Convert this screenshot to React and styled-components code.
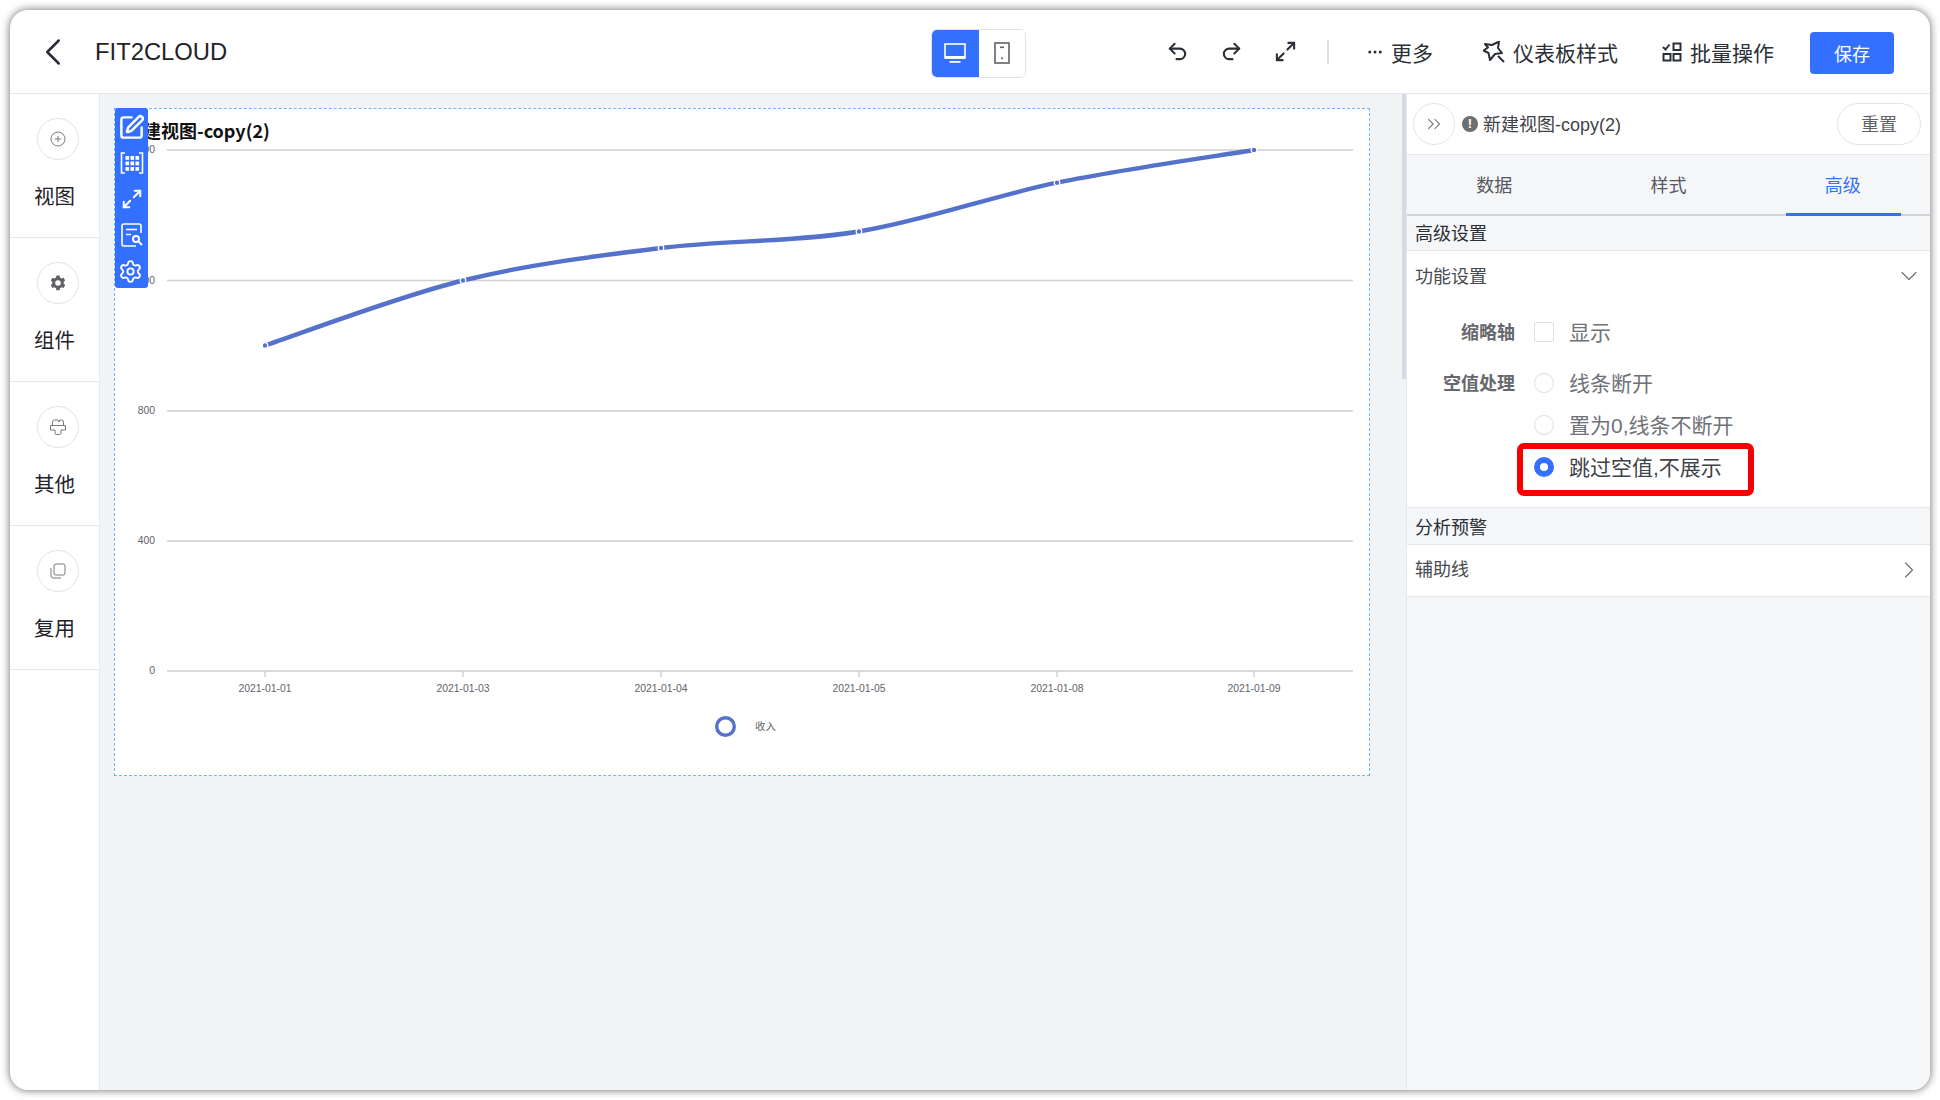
import React from 'react';
import styled, { createGlobalStyle } from 'styled-components';
import { ChevronLeft, ChevronDown, ChevronRight, ChevronsRight, Undo2, Redo2, Maximize2, SquarePen, Settings, MoreHorizontal } from 'lucide-react';

const FONT = '"Liberation Sans", "Noto Sans CJK SC", sans-serif';

const GlobalStyle = createGlobalStyle`
    html, body {
        margin: 0;
        padding: 0;
        background: #ffffff;
        overflow: hidden;
    }
    * {
        box-sizing: border-box;
    }
`;

// page
const Page = styled.div`
    width: 1940px;
    height: 1100px;
    padding: 10px;
    font-family: ${FONT};
`;

const Window = styled.div`
    width: 1920px;
    height: 1080px;
    display: flex;
    flex-direction: column;
    border-radius: 18px;
    overflow: hidden;
    background: #ffffff;
    box-shadow: 0 0 9px rgba(0, 0, 0, 0.6);
`;

// top bar
const TopBar = styled.header`
    height: 84px;
    flex: none;
    display: flex;
    align-items: center;
    border-bottom: 1px solid #e4e7ed;
`;

const TopLeft = styled.div`
    width: 921px;
    flex: none;
    display: flex;
    align-items: center;
    padding-left: 20px;
    color: #2b2f36;
`;

const AppTitle = styled.div`
    margin: 1px 0 0 19px;
    font-size: 23.8px;
    color: #1f2329;
`;

const DeviceGroup = styled.div`
    width: 95px;
    height: 49px;
    display: flex;
    border: 1px solid #dfe1e6;
    border-radius: 6px;
    overflow: hidden;
    margin-top: 3px;
`;

const DeviceButton = styled.div`
    flex: ${(p) => (p.$active ? '0 0 48px' : '1')};
    margin: ${(p) => (p.$active ? '-1px 0 -1px -1px' : '0')};
    display: flex;
    align-items: center;
    justify-content: center;
    background: ${(p) => (p.$active ? '#3370ff' : '#ffffff')};
`;

const TopRight = styled.div`
    flex: 1;
    display: flex;
    align-items: center;
    color: #2b2f36;
    padding-left: 139px;
`;

const IconButton = styled.span`
    width: 24px;
    height: 24px;
    display: flex;
    align-items: center;
    justify-content: center;
    margin-right: 30px;
`;

const Divider = styled.span`
    width: 2px;
    height: 24px;
    background: #dcdfe6;
    margin: 0 37px 0 0;
`;

const ToolItem = styled.div`
    display: flex;
    align-items: center;
    gap: ${(p) => p.$gap || 8}px;
    margin-right: ${(p) => p.$right || 36}px;
    font-size: 21px;
    color: #2b2f36;
    white-space: nowrap;
`;

const SaveButton = styled.button`
    width: 84px;
    height: 42px;
    border: 0;
    border-radius: 4px;
    background: #3370ff;
    color: #ffffff;
    font-family: inherit;
    font-size: 18px;
    margin-left: -1px;
    margin-top: 2px;
`;

// body
const Body = styled.div`
    flex: 1;
    display: flex;
    min-height: 0;
`;

const Sidebar = styled.aside`
    width: 90px;
    flex: none;
    border-right: 1px solid #e4e7ed;
`;

const SideItem = styled.div`
    height: 144px;
    padding-top: 24px;
    display: flex;
    flex-direction: column;
    align-items: center;
    border-bottom: 1px solid #e4e7ed;
`;

const SideCircle = styled.div`
    width: 42px;
    height: 42px;
    margin-left: 7px;
    display: flex;
    align-items: center;
    justify-content: center;
    border: 1px solid #e2e3e9;
    border-radius: 50%;
`;

const SideLabel = styled.div`
    margin-top: 23px;
    font-size: 20.5px;
    line-height: 28px;
    color: #1f2329;
`;

const Canvas = styled.main`
    position: relative;
    width: 1306px;
    flex: none;
    padding: 14px 0 0 14px;
    background: #f2f3f5;
`;

const ScrollThumb = styled.div`
    position: absolute;
    top: 0;
    right: 0;
    width: 4px;
    height: 285px;
    background: #d8d9e2;
`;

const ChartFrame = styled.section`
    position: relative;
    width: 1256px;
    height: 668px;
    background: #ffffff;
    border: 1px dashed #66b8ff;
`;

const ChartTitle = styled.div`
    height: 31px;
    padding: 8px 0 0 10px;
    font-family: "Noto Sans CJK SC", sans-serif;
    font-size: 18px;
    line-height: 26px;
    font-weight: 700;
    color: #111111;
    white-space: nowrap;
`;

const ChartSvg = styled.svg`
    display: block;
    width: 1254px;
    height: 635px;
`;

const AxisText = styled.text`
    font-family: ${FONT};
    font-size: 10.4px;
    fill: #5f6368;
`;

const HoverBar = styled.div`
    position: absolute;
    top: -1px;
    left: 0;
    width: 33px;
    height: 180px;
    display: flex;
    flex-direction: column;
    align-items: center;
    padding-top: 1px;
    background: #3370ff;
    border-radius: 3px;
    color: #ffffff;
`;

const HoverCell = styled.span`
    height: 36px;
    flex: none;
    display: flex;
    align-items: center;
    justify-content: center;
    margin-right: ${(p) => p.$shift || 0}px;
`;

// right panel
const Panel = styled.aside`
    flex: 1;
    display: flex;
    flex-direction: column;
    border-left: 1px solid #e4e7ed;
    background: #f5f6f8;
    position: relative;
`;

const PanelHeader = styled.div`
    height: 61px;
    flex: none;
    display: flex;
    align-items: center;
    padding: 0 9px 0 6px;
    background: #ffffff;
    border-bottom: 1px solid #e9ebef;
`;

const CollapseButton = styled.div`
    width: 42px;
    height: 42px;
    display: flex;
    align-items: center;
    justify-content: center;
    border: 1px solid #e4e5ea;
    border-radius: 50%;
    color: #7c7f85;
`;

const InfoDot = styled.span`
    width: 16px;
    height: 16px;
    margin-left: 7px;
    border-radius: 50%;
    background: #6d6e70;
    color: #ffffff;
    font-size: 13px;
    font-weight: 700;
    line-height: 16px;
    text-align: center;
`;

const ViewName = styled.div`
    margin: -3px 0 0 5px;
    font-size: 18px;
    color: #3f4248;
`;

const ResetButton = styled.div`
    width: 84px;
    height: 42px;
    margin-left: auto;
    padding-bottom: 3px;
    display: flex;
    align-items: center;
    justify-content: center;
    border: 1px solid #e4e5ea;
    border-radius: 21px;
    font-size: 18px;
    color: #5f6368;
    background: #ffffff;
`;

const Tabs = styled.div`
    height: 61px;
    flex: none;
    display: grid;
    grid-template-columns: repeat(3, 1fr);
    border-bottom: 2px solid #d3d4da;
`;

const Tab = styled.div`
    position: relative;
    display: flex;
    align-items: center;
    justify-content: center;
    padding-bottom: 2px;
    font-size: 18px;
    color: ${(p) => (p.$active ? '#3370ff' : '#55585e')};
    ${(p) => p.$active && `
        &::after {
            content: '';
            position: absolute;
            left: 30px;
            right: 29px;
            bottom: -2px;
            height: 3px;
            background: #3370ff;
        }
    `}
`;

const SectionTitle = styled.div`
    height: ${(p) => p.$height}px;
    display: flex;
    align-items: center;
    padding: 0 0 ${(p) => p.$lift || 0}px 8px;
    font-size: 18px;
    color: #2b2f36;
    border-bottom: 1px solid #e6e8ee;
`;

const RowHead = styled.div`
    height: ${(p) => p.$height}px;
    flex: none;
    display: flex;
    align-items: center;
    justify-content: space-between;
    padding: 0 7px ${(p) => p.$lift || 0}px 8px;
    font-size: 18px;
    color: #484b51;
    background: #ffffff;
    border-bottom: ${(p) => (p.$line ? '1px solid #e6e8ee' : '0')};
`;

const DownIcon = styled(ChevronDown)`
    margin-top: 3px;
`;

const RightIcon = styled(ChevronRight)`
    margin-top: 5px;
`;

const Form = styled.div`
    position: relative;
    height: 207px;
    padding-top: 9px;
    background: #ffffff;
    border-bottom: 1px solid #e6e8ee;
`;

const FormRow = styled.div`
    height: 42px;
    margin-top: ${(p) => p.$top || 0}px;
    display: flex;
    align-items: center;
`;

const FormLabel = styled.div`
    width: 108px;
    flex: none;
    text-align: right;
    font-size: 18px;
    font-weight: 700;
    color: #66686d;
`;

const Option = styled.div`
    display: flex;
    align-items: center;
    margin-left: 19px;
    font-size: 21px;
    color: ${(p) => (p.$on ? '#3f4248' : '#6f7278')};
`;

const CheckBox = styled.span`
    width: 20px;
    height: 20px;
    margin: 2px 15px 0 0;
    border: 1px solid #dcdee3;
    border-radius: 2px;
`;

const Radio = styled.span`
    width: 20px;
    height: 20px;
    margin: 2px 15px 0 0;
    border-radius: 50%;
    border: ${(p) => (p.$on ? '6px solid #3370ff' : '1px solid #dcdee3')};
    background: #ffffff;
`;

const RedMark = styled.div`
    position: absolute;
    left: 110px;
    top: 142px;
    width: 237px;
    height: 53px;
    border: 6px solid #f70000;
    border-radius: 7px;
`;

const points = [
    [265, 345.5],
    [463, 280.5],
    [661, 248],
    [859, 231.5],
    [1057, 182.7],
    [1254, 150],
];

// smooth line through the data points
function smoothPath(pts) {
    let d = `M${pts[0][0]} ${pts[0][1]}`;
    for (let i = 0; i < pts.length - 1; i += 1) {
        const p0 = pts[i - 1] || pts[i];
        const p1 = pts[i];
        const p2 = pts[i + 1];
        const p3 = pts[i + 2] || p2;
        const c1x = p1[0] + (p2[0] - p0[0]) / 6;
        const c1y = p1[1] + (p2[1] - p0[1]) / 6;
        const c2x = p2[0] - (p3[0] - p1[0]) / 6;
        const c2y = p2[1] - (p3[1] - p1[1]) / 6;
        d += ` C${c1x} ${c1y} ${c2x} ${c2y} ${p2[0]} ${p2[1]}`;
    }
    return d;
}

function Chart() {
    const lines = [
        [150, '1600'],
        [280.5, '1200'],
        [411, '800'],
        [541, '400'],
        [671, '0'],
    ];
    const dates = ['2021-01-01', '2021-01-03', '2021-01-04', '2021-01-05', '2021-01-08', '2021-01-09'];
    return (
        <ChartSvg viewBox="115 140 1254 635">
            {lines.map(([y, label]) => (
                <g key={label}>
                    <line x1="167" x2="1353" y1={y} y2={y} stroke="#cfcfcf" strokeWidth="1.6" />
                    <AxisText x="155" y={y + 3} textAnchor="end">{label}</AxisText>
                </g>
            ))}
            {points.map(([x], i) => (
                <g key={x}>
                    <line x1={x} x2={x} y1="671" y2="677" stroke="#cfcfcf" strokeWidth="1.4" />
                    <AxisText x={x} y="692" textAnchor="middle">{dates[i]}</AxisText>
                </g>
            ))}
            <path d={smoothPath(points)} fill="none" stroke="#5572cb" strokeWidth="4.4" />
            {points.map(([x, y]) => (
                <circle key={x} cx={x} cy={y} r="2.8" fill="#5572cb" stroke="#ffffff" strokeWidth="1.2" />
            ))}
            <circle cx="725.5" cy="726.5" r="8.8" fill="#ffffff" stroke="#5572cb" strokeWidth="3.4" />
            <AxisText x="755" y="730">收入</AxisText>
        </ChartSvg>
    );
}

const PlusIcon = () => (
    <svg width="16" height="16" viewBox="0 0 16 16" fill="none" stroke="#77797e" strokeWidth="1">
        <circle cx="8" cy="8" r="7" />
        <path d="M8 4.800v6.400M4.800 8h6.400" />
    </svg>
);

const GearIcon = () => (
    <svg width="16" height="16" viewBox="0 0 16 16">
        <path
            fill="#606266"
            fillRule="evenodd"
            d="M6.400 0.400h3.200l.4 2 1.700 1 1.900-.7 1.600 2.800-1.500 1.300v2l1.500 1.300-1.600 2.800-1.900-.7-1.700 1-.4 2H6.400l-.4-2-1.700-1-1.900.7L.8 10.100l1.500-1.300v-2L.8 5.500l1.600-2.800 1.900.7 1.700-1zM8 5.200a2.800 2.800 0 1 0 0 5.600 2.800 2.800 0 0 0 0-5.600z"
        />
    </svg>
);

const OtherIcon = () => (
    <svg width="16" height="16" viewBox="0 0 16 16" fill="none" stroke="#77797e" strokeWidth="1">
        <path d="M2.500 6.500V3a2 2 0 0 1 2-2H8l1 2 1-2h1.500a2 2 0 0 1 2 2v3.500" />
        <path d="M.5 6.500h15v4.500H11v3a1.500 1.500 0 0 1-1.500 1.500h-3A1.500 1.500 0 0 1 5 14v-3H.5z" />
    </svg>
);

const CopyIcon = () => (
    <svg width="16" height="16" viewBox="0 0 16 16" fill="none" stroke="#77797e" strokeWidth="1">
        <rect x="4" y="1" width="11" height="11" rx="2" />
        <path d="M1 5v7.500A2.500 2.500 0 0 0 3.500 15H11" />
    </svg>
);

const DesktopIcon = () => (
    <svg width="22" height="22" viewBox="0 0 22 22" fill="none">
        <rect x="1" y="2" width="20" height="14" stroke="#ffffff" strokeWidth="1.6" />
        <rect x="1" y="14" width="20" height="2.6" fill="#ffffff" />
        <rect x="5.500" y="19" width="11" height="1.8" fill="#ffffff" />
    </svg>
);

const TabletIcon = () => (
    <svg width="16" height="22" viewBox="0 0 16 22" fill="none">
        <rect x="1" y="1" width="14" height="20" stroke="#606266" strokeWidth="1.6" />
        <rect x="6" y="4.500" width="4" height="1.6" fill="#606266" />
        <rect x="7" y="15.500" width="2" height="1.6" fill="#606266" />
    </svg>
);

const StarIcon = () => (
    <svg width="22" height="22" viewBox="0 0 22 22" fill="none" stroke="#2b2f36" strokeWidth="2" strokeLinejoin="round">
        <path d="M2 3l7 1 7-3.500-1 6.500 4 5-7 1-5 6-1.500-7-5-2.500L5 6.500z" />
        <path d="M15 15l6 6" />
    </svg>
);

const BatchIcon = () => (
    <svg width="20" height="20" viewBox="0 0 20 20" fill="none" stroke="#2b2f36" strokeWidth="2">
        <path d="M1 5l2.500 2.500L7.500 2.500" />
        <rect x="11.500" y="1.500" width="7" height="6.500" />
        <rect x="1.500" y="12" width="7" height="6.500" />
        <rect x="11.500" y="12" width="7" height="6.500" />
    </svg>
);

const GridIcon = () => (
    <svg width="24" height="22" viewBox="0 0 24 22" fill="#ffffff">
        <path d="M5 1H1.500v20H5M19 1h3.500v20H19" fill="none" stroke="#ffffff" strokeWidth="1.6" />
        {[4, 9.5, 15].map((y) => [5.5, 10.5, 15.5].map((x) => (
            <rect key={`${x}-${y}`} x={x} y={y} width="3.6" height="3.8" />
        )))}
    </svg>
);

const DocSearchIcon = () => (
    <svg width="22" height="24" viewBox="0 0 22 24" fill="none" stroke="#ffffff" strokeWidth="1.6">
        <path d="M20 10V3a2 2 0 0 0-2-2H3a2 2 0 0 0-2 2v18a2 2 0 0 0 2 2h12" />
        <path d="M5 6.500h11M5 11.500h5" />
        <circle cx="15" cy="16" r="3" strokeWidth="2" />
        <path d="M17.500 18.500l3.500 3.500" strokeWidth="2" />
    </svg>
);

function App() {
    return (
        <Page>
            <GlobalStyle />
            <Window>
                <TopBar>
                    <TopLeft>
                        <ChevronLeft size={46} strokeWidth={1.3} />
                        <AppTitle>FIT2CLOUD</AppTitle>
                    </TopLeft>
                    <DeviceGroup>
                        <DeviceButton $active><DesktopIcon /></DeviceButton>
                        <DeviceButton><TabletIcon /></DeviceButton>
                    </DeviceGroup>
                    <TopRight>
                        <IconButton><Undo2 size={23} strokeWidth={2.2} /></IconButton>
                        <IconButton><Redo2 size={23} strokeWidth={2.2} /></IconButton>
                        <IconButton><Maximize2 size={23} strokeWidth={2.2} /></IconButton>
                        <Divider />
                        <ToolItem $gap={7} $right={50}>
                            <MoreHorizontal size={18} strokeWidth={2} />
                            更多
                        </ToolItem>
                        <ToolItem $right={44}>
                            <StarIcon />
                            仪表板样式
                        </ToolItem>
                        <ToolItem $right={37}>
                            <BatchIcon />
                            批量操作
                        </ToolItem>
                        <SaveButton>保存</SaveButton>
                    </TopRight>
                </TopBar>
                <Body>
                    <Sidebar>
                        <SideItem>
                            <SideCircle><PlusIcon /></SideCircle>
                            <SideLabel>视图</SideLabel>
                        </SideItem>
                        <SideItem>
                            <SideCircle><GearIcon /></SideCircle>
                            <SideLabel>组件</SideLabel>
                        </SideItem>
                        <SideItem>
                            <SideCircle><OtherIcon /></SideCircle>
                            <SideLabel>其他</SideLabel>
                        </SideItem>
                        <SideItem>
                            <SideCircle><CopyIcon /></SideCircle>
                            <SideLabel>复用</SideLabel>
                        </SideItem>
                    </Sidebar>
                    <Canvas>
                        <ChartFrame>
                            <ChartTitle>新建视图-copy(2)</ChartTitle>
                            <Chart />
                            <HoverBar>
                                <HoverCell><SquarePen size={27} strokeWidth={2.2} /></HoverCell>
                                <HoverCell><GridIcon /></HoverCell>
                                <HoverCell><Maximize2 size={22} strokeWidth={2.2} /></HoverCell>
                                <HoverCell><DocSearchIcon /></HoverCell>
                                <HoverCell $shift={3}><Settings size={25} strokeWidth={1.8} /></HoverCell>
                            </HoverBar>
                        </ChartFrame>
                        <ScrollThumb />
                    </Canvas>
                    <Panel>
                        <PanelHeader>
                            <CollapseButton><ChevronsRight size={22} strokeWidth={1.2} /></CollapseButton>
                            <InfoDot>!</InfoDot>
                            <ViewName>新建视图-copy(2)</ViewName>
                            <ResetButton>重置</ResetButton>
                        </PanelHeader>
                        <Tabs>
                            <Tab>数据</Tab>
                            <Tab>样式</Tab>
                            <Tab $active>高级</Tab>
                        </Tabs>
                        <SectionTitle $height={35} $lift={2}>高级设置</SectionTitle>
                        <RowHead $height={50} $lift={3}>
                            功能设置
                            <DownIcon size={28} strokeWidth={1} color="#6b6e75" />
                        </RowHead>
                        <Form>
                            <FormRow>
                                <FormLabel>缩略轴</FormLabel>
                                <Option><CheckBox />显示</Option>
                            </FormRow>
                            <FormRow $top={9}>
                                <FormLabel>空值处理</FormLabel>
                                <Option><Radio />线条断开</Option>
                            </FormRow>
                            <FormRow>
                                <FormLabel />
                                <Option><Radio />置为0,线条不断开</Option>
                            </FormRow>
                            <FormRow>
                                <FormLabel />
                                <Option $on><Radio $on />跳过空值,不展示</Option>
                            </FormRow>
                            <RedMark />
                        </Form>
                        <SectionTitle $height={37} $lift={1}>分析预警</SectionTitle>
                        <RowHead $height={52} $lift={6} $line>
                            辅助线
                            <RightIcon size={28} strokeWidth={1} color="#6b6e75" />
                        </RowHead>
                    </Panel>
                </Body>
            </Window>
        </Page>
    );
}

export default App;
